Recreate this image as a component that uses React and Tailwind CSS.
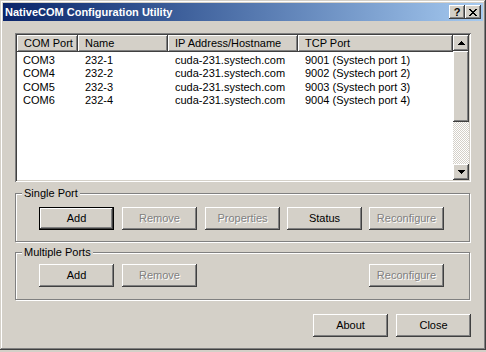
const raised =
  "shadow-[inset_-1px_-1px_#404040,inset_1px_1px_#ffffff,inset_-2px_-2px_#808080,inset_2px_2px_#d4d0c8]";

function Btn({ label, disabled, isDefault, className = "" }) {
  if (isDefault) {
    return (
      <div className={`w-[75px] h-[23px] border border-black ${className}`}>
        <div className={`w-full h-full flex items-center justify-center bg-[#d4d0c8] text-black ${raised}`}>
          {label}
        </div>
      </div>
    );
  }
  return (
    <div
      className={`w-[75px] h-[23px] flex items-center justify-center bg-[#d4d0c8] ${raised} ${
        disabled ? "text-[#808080] [text-shadow:1px_1px_0_#ffffff]" : "text-black"
      } ${className}`}
    >
      {label}
    </div>
  );
}

function GroupBox({ title, children, className = "" }) {
  return (
    <fieldset
      className={`w-[455px] border border-[#808080] shadow-[inset_1px_1px_#ffffff,1px_1px_#ffffff] ${className}`}
    >
      <legend className="ml-[6px] px-[2px] bg-[#d4d0c8] leading-[13px]">{title}</legend>
      {children}
    </fieldset>
  );
}

function Arrow({ up }) {
  return (
    <svg width="7" height="4" viewBox="0 0 7 4">
      {up ? (
        <path d="M3 0h1v1h1v1h1v1h1v1H0V3h1V2h1V1h1z" fill="#000" />
      ) : (
        <path d="M0 0h7v1H6v1H5v1H4v1H3V3H2V2H1V1H0z" fill="#000" />
      )}
    </svg>
  );
}

const rows = [
  ["COM3", "232-1", "cuda-231.systech.com", "9001 (Systech port 1)"],
  ["COM4", "232-2", "cuda-231.systech.com", "9002 (Systech port 2)"],
  ["COM5", "232-3", "cuda-231.systech.com", "9003 (Systech port 3)"],
  ["COM6", "232-4", "cuda-231.systech.com", "9004 (Systech port 4)"],
];

const cols = [
  { name: "COM Port", w: "w-[61px]" },
  { name: "Name", w: "w-[90px]" },
  { name: "IP Address/Hostname", w: "w-[130px]" },
  { name: "TCP Port", w: "flex-1" },
];

export default function App() {
  return (
    <div className="w-[486px] h-[352px] bg-[#d4d0c8] font-['Liberation_Sans',Arial,sans-serif] text-[11px] text-black overflow-hidden">
      <div className="w-[486px] h-[350px] p-[3px] flex flex-col shadow-[inset_-1px_-1px_#404040,inset_1px_1px_#d4d0c8,inset_-2px_-2px_#808080,inset_2px_2px_#ffffff]">
        {/* Title bar */}
        <div className="h-[18px] flex items-center bg-gradient-to-r from-[#0a246a] to-[#a6caf0] pl-[2px] pr-[2px]">
          <span className="text-white font-bold text-[11px] leading-none">
            NativeCOM Configuration Utility
          </span>
          <div className="ml-auto flex">
            <div className={`w-[16px] h-[14px] bg-[#d4d0c8] flex items-center justify-center font-bold text-[11px] leading-none ${raised}`}>
              ?
            </div>
            <div className={`w-[16px] h-[14px] bg-[#d4d0c8] flex items-center justify-center ${raised}`}>
              <svg width="8" height="7" viewBox="0 0 8 7">
                <path d="M0 0h2v1h1v1h2V1h1V0h2v1H7v1H6v1H5v1h1v1h1v1h1v1H6V6H5V5H3v1H2v1H0V6h1V5h1V4h1V3H2V2H1V1H0z" fill="#000" />
              </svg>
            </div>
          </div>
        </div>

        <div className="pl-[12px] flex flex-col">
          {/* List view */}
          <div className="mt-[12px] w-[456px] h-[149px] p-[2px] bg-white shadow-[inset_1px_1px_#808080,inset_-1px_-1px_#ffffff,inset_2px_2px_#404040,inset_-2px_-2px_#d4d0c8] flex">
            <div className="flex-1 flex flex-col">
              <div className="flex h-[17px]">
                {cols.map((c) => (
                  <div
                    key={c.name}
                    className={`${c.w} h-full bg-[#d4d0c8] flex items-center pl-[7px] ${raised}`}
                  >
                    {c.name}
                  </div>
                ))}
              </div>
              <div className="pt-[1px]">
                {rows.map((r) => (
                  <div key={r[0]} className="flex h-[13.5px] items-center">
                    <div className="w-[61px] pl-[6px]">{r[0]}</div>
                    <div className="w-[90px] pl-[7px]">{r[1]}</div>
                    <div className="w-[130px] pl-[7px]">{r[2]}</div>
                    <div className="flex-1 pl-[7px]">{r[3]}</div>
                  </div>
                ))}
              </div>
            </div>
            {/* Scrollbar */}
            <div className="w-[16px] flex flex-col">
              <div className={`h-[16px] bg-[#d4d0c8] flex items-center justify-center ${raised}`}>
                <Arrow up />
              </div>
              <div className={`h-[71px] bg-[#d4d0c8] ${raised}`} />
              <div className="flex-1 bg-[repeating-conic-gradient(#d4d0c8_0%_25%,#ffffff_0%_50%)] bg-[length:2px_2px]" />
              <div className={`h-[16px] bg-[#d4d0c8] flex items-center justify-center ${raised}`}>
                <Arrow />
              </div>
            </div>
          </div>

          {/* Single Port */}
          <GroupBox title="Single Port" className="mt-[5px]">
            <div className="flex pt-[7px] pb-[11px] pl-[23px]">
              <Btn label="Add" isDefault />
              <Btn label="Remove" disabled className="ml-[8px]" />
              <Btn label="Properties" disabled className="ml-[8px]" />
              <Btn label="Status" className="ml-[7px]" />
              <Btn label="Reconfigure" disabled className="ml-[7px]" />
            </div>
          </GroupBox>

          {/* Multiple Ports */}
          <GroupBox title="Multiple Ports" className="mt-[4px]">
            <div className="flex pt-[5px] pb-[12px] pl-[23px] pr-[25px]">
              <Btn label="Add" />
              <Btn label="Remove" disabled className="ml-[8px]" />
              <Btn label="Reconfigure" disabled className="ml-auto" />
            </div>
          </GroupBox>

          {/* Bottom buttons */}
          <div className="mt-[14px] w-[456px] flex justify-end">
            <Btn label="About" />
            <Btn label="Close" className="ml-[8px]" />
          </div>
        </div>
      </div>
    </div>
  );
}
